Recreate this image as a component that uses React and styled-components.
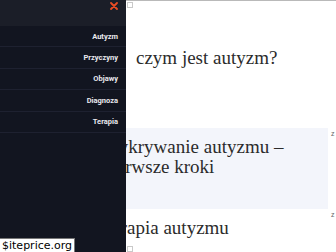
import styled, { createGlobalStyle } from 'styled-components';

const GlobalStyle = createGlobalStyle`
  html, body {
    margin: 0;
    padding: 0;
    background: #ffffff;
    overflow: hidden;
  }
  #root {
    width: 336px;
    height: 252px;
  }
`;

const menu = ['Autyzm', 'Przyczyny', 'Objawy', 'Diagnoza', 'Terapia'];

const posts = [
  { title: 'Wykrywanie autyzmu –\npierwsze kroki', tint: true },
  { title: 'Terapia autyzmu', tint: false },
];

const App = () => {
  return (
    <Page>
      <GlobalStyle />
      <Content>
        <TopIcon />
        <PageTitle>czym jest autyzm?</PageTitle>
        <PostList>
          {posts.map((p) => (
            <PostRow key={p.title}>
              <Post $tint={p.tint}>
                <PostTitle>{p.title}</PostTitle>
              </Post>
              <Meta>z</Meta>
            </PostRow>
          ))}
        </PostList>
        <BottomIcon />
      </Content>
      <Sidebar>
        <SidebarHead>
          <Close aria-label="close">
            <svg width="8" height="8" viewBox="0 0 8 8">
              <path d="M1 1 L7 7 M7 1 L1 7" stroke="#ea4b24" strokeWidth="1.8" strokeLinecap="round" />
            </svg>
          </Close>
        </SidebarHead>
        <Menu>
          {menu.map((m) => (
            <MenuItem key={m}>{m}</MenuItem>
          ))}
        </Menu>
      </Sidebar>
      <Watermark>$iteprice.org</Watermark>
    </Page>
  );
};

export default App;

const Page = styled.div`
  position: relative;
  width: 336px;
  height: 252px;
  overflow: hidden;
  background: #fff;
`;

const Content = styled.div`
  position: relative;
  height: 252px;
  border-top: 1px solid #b9b9b9;
  box-sizing: border-box;
`;

const TopIcon = styled.div`
  position: absolute;
  left: 127px;
  top: 1px;
  width: 4px;
  height: 4px;
  border: 1px solid #c9c9c9;
`;

const BottomIcon = styled(TopIcon)`
  top: auto;
  bottom: 0;
`;

const PageTitle = styled.h1`
  margin: 0;
  padding: 46px 0 0 136px;
  height: 127px;
  box-sizing: border-box;
  font-family: 'Liberation Serif', 'DejaVu Serif', serif;
  font-weight: 400;
  font-size: 19px;
  line-height: 22px;
  color: #2b2b2b;
`;

const PostList = styled.div`
  display: flex;
  flex-direction: column;
  padding-left: 100px;
`;

const PostRow = styled.div`
  display: flex;
  align-items: flex-start;
`;

const Post = styled.div`
  width: 228px;
  height: 81px;
  box-sizing: border-box;
  padding: 9px 0 0 2px;
  background: ${(p) => (p.$tint ? '#f3f5fb' : '#ffffff')};
`;

const PostTitle = styled.h2`
  margin: 0;
  white-space: pre-line;
  font-family: 'Liberation Serif', 'DejaVu Serif', serif;
  font-weight: 400;
  font-size: 19px;
  line-height: 20px;
  color: #2b2b2b;
`;

const Meta = styled.span`
  margin: 2px 0 0 3px;
  font-family: 'Liberation Sans', Arial, sans-serif;
  font-size: 7px;
  color: #666;
`;

const Sidebar = styled.nav`
  position: absolute;
  left: 0;
  top: 0;
  width: 126px;
  height: 252px;
  background: #121520;
  display: flex;
  flex-direction: column;
`;

const SidebarHead = styled.div`
  height: 26px;
  background: #1b1e28;
  display: flex;
  justify-content: flex-end;
  align-items: flex-start;
  padding: 2px 8px 0 0;
  box-sizing: border-box;
`;

const Close = styled.button`
  border: none;
  background: transparent;
  padding: 0;
  width: 8px;
  height: 8px;
  display: flex;
  cursor: pointer;
`;

const Menu = styled.ul`
  list-style: none;
  margin: 0;
  padding: 0;
`;

const MenuItem = styled.li`
  height: 21.4px;
  box-sizing: border-box;
  display: flex;
  align-items: center;
  justify-content: flex-end;
  padding-right: 8px;
  border-bottom: 1px solid #1e2130;
  font-family: Roboto, 'Liberation Sans', sans-serif;
  font-weight: 700;
  font-size: 7.5px;
  color: #e9e9ee;
`;

const Watermark = styled.div`
  position: absolute;
  left: 0;
  bottom: 0;
  padding: 0 2px;
  height: 13px;
  background: #fff;
  border: 1px solid #777;
  border-left: none;
  border-bottom: none;
  font-family: 'DejaVu Sans', sans-serif;
  font-size: 11px;
  line-height: 13px;
  color: #000;
`;
